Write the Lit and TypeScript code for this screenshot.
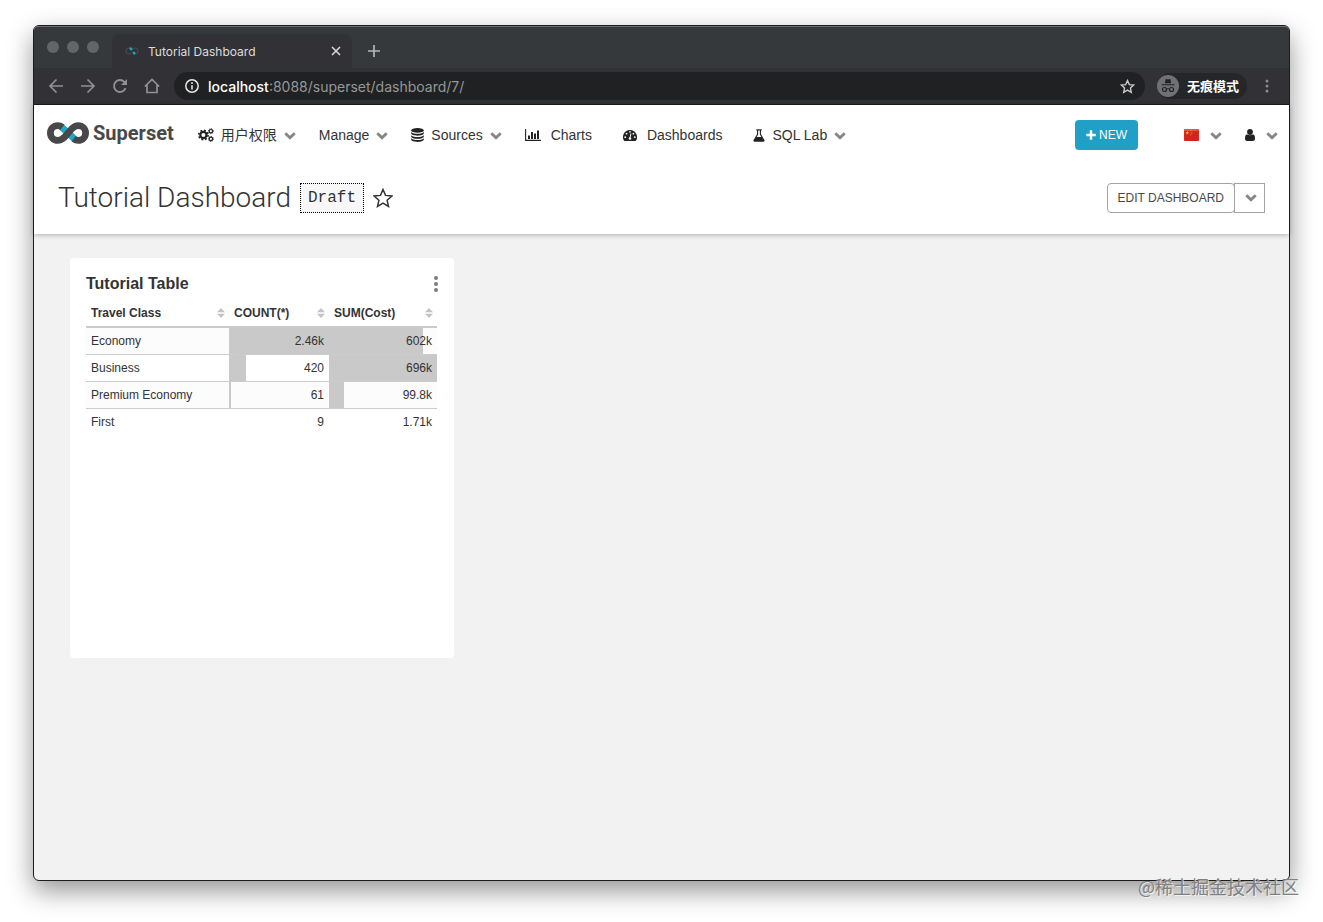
import { LitElement, html, css, svg } from "lit";
import { customElement } from "lit/decorators.js";
import { styleMap } from "lit/directives/style-map.js";

const chevron = html`<svg class="chevron" viewBox="0 0 12 8" width="12" height="8" aria-hidden="true">
  <path d="M1.3 1.2 6 5.8l4.7-4.6" fill="none" stroke="#868686" stroke-width="2.9" />
</svg>`;

const gears = html`<svg viewBox="0 0 16 14" width="16" height="14" aria-hidden="true">
  <circle cx="5.4" cy="7" r="3.1" fill="none" stroke="#222" stroke-width="2.2" />
  <circle cx="5.4" cy="7" r="4.7" fill="none" stroke="#222" stroke-width="1.6" stroke-dasharray="1.9 1.79" />
  ${[3.2, 10.9].map(
    (y) => svg`<circle cx="12.9" cy=${y} r="1.7" fill="none" stroke="#222" stroke-width="1.2" />
      <circle cx="12.9" cy=${y} r="2.5" fill="none" stroke="#222" stroke-width="1" stroke-dasharray="1 .96" />`
  )}
</svg>`;

const database = html`<svg viewBox="0 0 13 14" width="13" height="14" aria-hidden="true">
  <ellipse cx="6.5" cy="2.4" rx="6.3" ry="2.4" fill="#222" />
  ${[4.1, 7.2, 10.3].map(
    (y) => svg`<path transform="translate(0 ${y})" d="M.2 0C2 1.500 4 1.700 6.500 1.700S11 1.500 12.800 0v1.200c0 1.400-2.800 2.400-6.300 2.400S.2 2.600.2 1.200z" fill="#222" />`
  )}
</svg>`;

const bars = html`<svg viewBox="0 0 16 14" width="16" height="14" aria-hidden="true">
  <path d="M.6 1v11.400H16" fill="none" stroke="#222" stroke-width="1.100" />
  <path d="M3 7.500h2V11H3zM6 4h2v7H6zM9 5.500h2V11H9zM12 2.500h2V11h-2z" fill="#222" />
</svg>`;

const gauge = html`<svg viewBox="0 0 14 13" width="14" height="13" aria-hidden="true">
  <path d="M7 1a7 7 0 0 0-5.900 10.800c.1.200.3.200.5.200h10.800c.2 0 .4 0 .5-.2A7 7 0 0 0 7 1z" fill="#222" />
  <path d="M7.900 4.500 7.100 8.600" stroke="#fff" stroke-width="1" />
  <circle cx="7" cy="9.500" r="1.300" fill="#fff" />
  <circle cx="2.200" cy="8.200" r=".9" fill="#fff" /><circle cx="3.600" cy="4.700" r=".9" fill="#fff" />
  <circle cx="7" cy="2.900" r=".8" fill="#fff" /><circle cx="10.400" cy="4.700" r=".9" fill="#fff" />
  <circle cx="11.800" cy="8.200" r=".9" fill="#fff" />
</svg>`;

const flask = html`<svg viewBox="0 0 12 13" width="12" height="13" aria-hidden="true">
  <path d="M3.300.9h5.400" stroke="#222" stroke-width="1.200" />
  <path d="M4.600 1v4.300L1.100 11.200c-.3.600 0 .9.500.9h8.800c.5 0 .8-.3.500-.9L7.400 5.300V1" fill="none" stroke="#222" stroke-width="1.100" />
  <path d="M3.100 7.900h5.800l2.300 4.100H.8z" fill="#222" />
</svg>`;

const user = html`<svg viewBox="0 0 10 12" width="10" height="12" aria-hidden="true">
  <circle cx="5" cy="3" r="2.900" fill="#222" />
  <path d="M2 5.300C.6 5.600 0 7.200 0 9.500 0 11 .8 12 2 12h6c1.200 0 2-1 2-2.500C10 7.200 9.400 5.600 8 5.300 7 6.500 3 6.500 2 5.300z" fill="#222" />
</svg>`;

const flag = html`<svg viewBox="0 0 15 12" width="15" height="12" role="img" aria-label="中文">
  <rect width="15" height="12" rx="1" fill="#d8221c" />
  <path d="M0 1a1 1 0 0 1 1-1h13a1 1 0 0 1 1 1v1H0z" fill="#e6554a" />
  <path d="m3.300 2 .5 1.300h1.300l-1 .9.400 1.300-1.200-.8-1.200.8.400-1.300-1-.9h1.300z" fill="#f6c33c" />
  <path d="M6.200 1.400h.9M7.400 2.900h.9M7.400 4.500h.9M6.200 5.900h.9" stroke="#f0a83a" stroke-width=".8" />
</svg>`;

const brandMark = html`<svg viewBox="0 0 42 22" width="42" height="22" aria-hidden="true">
  <path d="M14.500 5 27.500 17" stroke="#20a7c9" stroke-width="7" fill="none" />
  <path d="M17.200 15.600C14.700 17.900 13 18.400 10.800 18.400a7.400 7.400 0 1 1 0-14.800c1.900 0 3.300.6 4.600 1.600" fill="none" stroke="#484848" stroke-width="6.800" />
  <path d="M26.600 16.800C27.900 17.800 29.300 18.400 31.200 18.400a7.400 7.400 0 1 0 0-14.800c-2.200 0-3.900.7-6.200 3l-8.200 9.400" fill="none" stroke="#484848" stroke-width="6.800" />
</svg>`;

interface NavEntry {
  label: string;
  icon?: unknown;
  menu?: boolean;
}

const NAV: NavEntry[] = [
  { label: "用户权限", icon: gears, menu: true },
  { label: "Manage", menu: true },
  { label: "Sources", icon: database, menu: true },
  { label: "Charts", icon: bars },
  { label: "Dashboards", icon: gauge },
  { label: "SQL Lab", icon: flask, menu: true },
];

const ROWS = [
  { travel: "Economy", count: "2.46k", countBar: 100, sum: "602k", sumBar: 87 },
  { travel: "Business", count: "420", countBar: 17, sum: "696k", sumBar: 100 },
  { travel: "Premium Economy", count: "61", countBar: 2, sum: "99.8k", sumBar: 14 },
  { travel: "First", count: "9", countBar: 0, sum: "1.71k", sumBar: 0 },
];

@customElement("browser-chrome")
export class BrowserChrome extends LitElement {
  static styles = css`
    :host {
      display: block;
      font-family: Inter, "Noto Sans CJK SC", sans-serif;
      color: #dcddde;
    }
    button {
      display: flex;
      padding: 0;
      border: 0;
      background: none;
      color: inherit;
      font: inherit;
    }
    svg {
      display: block;
      flex: none;
    }
    .strip {
      display: flex;
      align-items: flex-end;
      height: 42px;
      background: #36393b;
      border-radius: 4px 4px 0 0;
      box-shadow: inset 0 1px #6b6e70;
    }
    .lights {
      display: flex;
      gap: 8px;
      padding: 0 13px 15px 13px;
    }
    .light {
      width: 12px;
      height: 12px;
      border-radius: 50%;
      background: #626668;
    }
    .tab {
      display: flex;
      align-items: center;
      gap: 9px;
      width: 240px;
      height: 34px;
      padding: 0 11px 0 13px;
      box-sizing: border-box;
      border-radius: 8px 8px 0 0;
      background: #323136;
      font-size: 12px;
    }
    .tab-title {
      flex: 1;
    }
    .plus {
      padding: 0 16px 11px;
    }
    .toolbar {
      display: flex;
      align-items: center;
      gap: 16px;
      height: 36px;
      padding: 0 18px 0 14px;
      background: #323136;
      border-bottom: 1px solid #1c1c1e;
      color: #8f9193;
    }
    .address {
      display: flex;
      align-items: center;
      flex: 1;
      height: 28px;
      margin-left: -2px;
      padding: 0 10px 0 11px;
      border-radius: 14px;
      background: #1f2123;
      font-size: 14px;
    }
    .host {
      padding-left: 9px;
      color: #fff;
      font-weight: 500;
    }
    .path {
      flex: 1;
      min-width: 0;
      padding: 0;
      border: 0;
      outline: 0;
      background: none;
      color: #96989a;
      font: inherit;
    }
    .incognito {
      display: flex;
      align-items: center;
      gap: 8px;
      height: 26px;
      margin-left: -4px;
      padding-right: 8px;
      border-radius: 13px;
      background: #252629;
      color: #fff;
      font-size: 13px;
      font-weight: 700;
    }
    .mode {
      padding-bottom: 2px;
    }
  `;

  render() {
    return html`
      <div class="strip">
        <div class="lights"><span class="light"></span><span class="light"></span><span class="light"></span></div>
        <div class="tab">
          <svg viewBox="0 0 14 10" width="14" height="10" aria-hidden="true">
            <path d="M6 3C4.500 1.500 1 1.500 1 5s3.500 3.500 5 2M8 3c1.500-1.500 5-1.500 5 2s-3.500 3.500-5 2" fill="none" stroke="#45454a" stroke-width="1.500" />
            <path d="M5 1.800 7 4M8 6l2 2" stroke="#20a7c9" stroke-width="2.400" />
          </svg>
          <span class="tab-title">Tutorial Dashboard</span>
          <button aria-label="Close tab">
            <svg viewBox="0 0 10 10" width="10" height="10"><path d="m1 1 8 8M9 1 1 9" stroke="#dcddde" stroke-width="1.500" /></svg>
          </button>
        </div>
        <button class="plus" aria-label="New tab">
          <svg viewBox="0 0 12 12" width="12" height="12"><path d="M6 0v12M0 6h12" stroke="#b4b6b8" stroke-width="1.700" /></svg>
        </button>
      </div>
      <div class="toolbar">
        <button aria-label="Back">
          <svg viewBox="0 0 16 16" width="16" height="16"><path d="M15 8H2M8.500 1.500 2 8l6.500 6.500" fill="none" stroke="currentColor" stroke-width="1.700" /></svg>
        </button>
        <button aria-label="Forward">
          <svg viewBox="0 0 16 16" width="16" height="16"><path d="M1 8h13M7.500 1.500 14 8l-6.500 6.500" fill="none" stroke="currentColor" stroke-width="1.700" /></svg>
        </button>
        <button aria-label="Reload">
          <svg viewBox="0 0 16 16" width="16" height="16">
            <path d="M13.600 10.200A6 6 0 1 1 12.300 3.800L14 5.500" fill="none" stroke="currentColor" stroke-width="1.800" />
            <path d="M15 1v6H9z" fill="currentColor" />
          </svg>
        </button>
        <button aria-label="Home">
          <svg viewBox="0 0 16 16" width="16" height="16"><path d="M.8 8.500 8 1.500l7.200 7M3 7v7.500h10V7" fill="none" stroke="currentColor" stroke-width="1.700" /></svg>
        </button>
        <div class="address">
          <svg viewBox="0 0 14 14" width="14" height="14" aria-hidden="true">
            <circle cx="7" cy="7" r="6.200" fill="none" stroke="#e6e7e8" stroke-width="1.500" />
            <path d="M7 6.200v4.300M7 3.300v1.600" stroke="#e6e7e8" stroke-width="1.600" />
          </svg>
          <label class="host" for="address">localhost</label>
          <input class="path" id="address" type="text" value=":8088/superset/dashboard/7/" />
          <button aria-label="Bookmark">
            <svg viewBox="0 0 24 24" width="15" height="15"><path d="m12 2.500 2.900 6.400 7 .8-5.200 4.700 1.400 6.900L12 17.800l-6.100 3.500 1.400-6.900L2.100 9.700l7-.8z" fill="none" stroke="#c8cacb" stroke-width="2.200" /></svg>
          </button>
        </div>
        <div class="incognito">
          <svg viewBox="0 0 22 22" width="22" height="22" aria-hidden="true">
            <circle cx="11" cy="11" r="11" fill="#6f7173" />
            <path d="M7.800 8.300 8.600 4.500c.1-.4.400-.5.800-.4l1.600.4 1.600-.4c.4-.1.700 0 .8.400l.8 3.800zM4.500 9.200h13v1.100h-13z" fill="#222326" />
            <path d="M9.500 14.200c1-.6 2-.6 3 0" fill="none" stroke="#222326" />
            <circle cx="7.500" cy="14.500" r="2" fill="none" stroke="#222326" stroke-width="1.200" />
            <circle cx="14.500" cy="14.500" r="2" fill="none" stroke="#222326" stroke-width="1.200" />
          </svg>
          <span class="mode">无痕模式</span>
        </div>
        <button aria-label="Browser menu">
          <svg viewBox="0 0 8 16" width="8" height="16" fill="#8a8c8e">
            <circle cx="4" cy="3" r="1.500" /><circle cx="4" cy="8" r="1.500" /><circle cx="4" cy="13" r="1.500" />
          </svg>
        </button>
      </div>
    `;
  }
}

@customElement("superset-nav")
export class SupersetNav extends LitElement {
  static styles = css`
    :host {
      display: flex;
      align-items: center;
      height: 60px;
      padding: 0 11px 0 13px;
      color: #333;
      font-family: "Liberation Sans", "Noto Sans CJK SC", sans-serif;
      font-size: 14px;
    }
    a {
      color: inherit;
      text-decoration: none;
    }
    svg {
      display: block;
      flex: none;
    }
    .brand {
      display: flex;
      align-items: center;
      gap: 4px;
      padding: 0 24px 4px 0;
      color: #484848;
      font-family: Roboto, sans-serif;
      font-size: 20px;
      line-height: 24px;
      font-weight: 700;
    }
    .items {
      display: flex;
      flex: 1;
      align-items: center;
    }
    .item {
      display: flex;
      align-items: center;
      gap: 10px;
      margin-right: 31px;
      line-height: 20px;
    }
    .menu {
      gap: 7px;
      margin-right: 23px;
    }
    .chevron {
      padding-top: 2px;
    }
    .new {
      display: flex;
      align-items: center;
      justify-content: center;
      gap: 3px;
      height: 30px;
      padding: 0 11px;
      border: 0;
      border-radius: 4px;
      background: #20a0c6;
      color: #fff;
      font-family: inherit;
      font-size: 12px;
    }
    .tools {
      display: flex;
      gap: 23px;
      padding-left: 46px;
    }
    .tool {
      display: flex;
      align-items: center;
      gap: 11px;
    }
  `;

  render() {
    return html`
      <a class="brand" href="#">${brandMark}<span>Superset</span></a>
      <nav class="items">
        ${NAV.map(
          (n) => html`<a class="item ${n.menu ? "menu" : ""}" href="#">${n.icon ?? ""}<span>${n.label}</span>${n.menu ? chevron : ""}</a>`
        )}
      </nav>
      <button class="new">
        <svg viewBox="0 0 10 10" width="10" height="10" aria-hidden="true"><path d="M5 .3v9.400M.3 5h9.400" stroke="#fff" stroke-width="2.500" /></svg>
        <span>NEW</span>
      </button>
      <div class="tools">
        <a class="tool" href="#" aria-label="Language">${flag}${chevron}</a>
        <a class="tool" href="#" aria-label="Account">${user}${chevron}</a>
      </div>
    `;
  }
}

@customElement("chart-card")
export class ChartCard extends LitElement {
  static styles = css`
    :host {
      display: block;
      width: 384px;
      min-height: 400px;
      padding: 16px;
      box-sizing: border-box;
      border-radius: 4px;
      background: #fff;
      color: #333;
      font-family: "Liberation Sans", sans-serif;
    }
    .head {
      display: flex;
      align-items: center;
      justify-content: space-between;
      height: 20px;
    }
    h2 {
      margin: 0;
      font-size: 16px;
      line-height: 20px;
    }
    .more {
      display: flex;
      padding: 0;
      border: 0;
      background: none;
    }
    table {
      width: 351px;
      margin-top: 6px;
      table-layout: fixed;
      border-collapse: separate;
      border-spacing: 0;
      font-size: 12px;
      line-height: 16px;
    }
    th {
      box-sizing: border-box;
      padding: 5px 4px 5px 5px;
      border-bottom: 2px solid #c9cccb;
      text-align: left;
    }
    .travel {
      width: 143px;
    }
    .count {
      width: 100px;
    }
    .label {
      display: flex;
      align-items: center;
      justify-content: space-between;
    }
    td {
      padding: 5px;
      border-bottom: 1px solid #ccc;
    }
    tr:nth-child(odd) td {
      background-color: #fcfcfc;
    }
    tr:last-child td {
      border-bottom: 0;
      background-color: #fff;
    }
    .number {
      background-image: linear-gradient(#c9c9c9, #c9c9c9);
      background-repeat: no-repeat;
      background-origin: border-box;
      text-align: right;
    }
  `;

  private heading(label: string, cls: string) {
    return html`<th class=${cls} scope="col">
      <span class="label">${label}
        <svg viewBox="0 0 8 10" width="8" height="10" aria-hidden="true"><path d="M0 4.200 4 0l4 4.200zM0 5.800h8L4 10z" fill="#c4c4c4" /></svg>
      </span>
    </th>`;
  }

  render() {
    return html`
      <div class="head">
        <h2>Tutorial Table</h2>
        <button class="more" aria-label="Chart options">
          <svg viewBox="0 0 4 16" width="4" height="16" fill="#7c7c7c">
            <circle cx="2" cy="2" r="2" /><circle cx="2" cy="8" r="2" /><circle cx="2" cy="14" r="2" />
          </svg>
        </button>
      </div>
      <table>
        <thead>
          <tr>${this.heading("Travel Class", "travel")}${this.heading("COUNT(*)", "count")}${this.heading("SUM(Cost)", "sum")}</tr>
        </thead>
        <tbody>
          ${ROWS.map(
            (r) => html`<tr>
              <td>${r.travel}</td>
              <td class="number" style=${styleMap({ backgroundSize: `${r.countBar}% 100%` })}>${r.count}</td>
              <td class="number" style=${styleMap({ backgroundSize: `${r.sumBar}% 100%` })}>${r.sum}</td>
            </tr>`
          )}
        </tbody>
      </table>
    `;
  }
}

@customElement("app-root")
export class AppRoot extends LitElement {
  static styles = css`
    :host {
      display: flex;
      position: relative;
      min-height: 100vh;
      padding: 25px 33px 41px;
      box-sizing: border-box;
      background: #fff;
      overflow: hidden;
      color: #333;
      font-family: "Liberation Sans", "Noto Sans CJK SC", sans-serif;
    }
    .window {
      display: flex;
      flex: 1;
      flex-direction: column;
      border: 1px solid #1c1c1e;
      border-radius: 6px;
      background: #f2f2f2;
      box-shadow: 0 10px 26px rgba(0, 0, 0, 0.42);
    }
    .top {
      background: #fff;
      box-shadow: 0 1px 5px rgba(0, 0, 0, 0.28);
    }
    .header {
      display: flex;
      align-items: center;
      height: 69px;
      padding: 0 24px 3px;
      box-sizing: border-box;
      gap: 9px;
    }
    h1 {
      margin: 0;
      font-family: Roboto, sans-serif;
      font-size: 28px;
      line-height: 32px;
      font-weight: 300;
    }
    .draft {
      height: 30px;
      padding: 0 7px;
      box-sizing: border-box;
      border: 1px dotted #000;
      background: #f7f7f7;
      font-family: "Liberation Mono", monospace;
      font-size: 16px;
      line-height: 28px;
    }
    .star {
      display: flex;
      padding: 0;
      border: 0;
      background: none;
    }
    .edit {
      display: flex;
      margin-left: auto;
    }
    .edit button {
      height: 30px;
      padding: 0 10px;
      border: 1px solid #a3a3a3;
      background: #fff;
      color: #484848;
      font-family: inherit;
      font-size: 12px;
    }
    .edit .main {
      border-radius: 4px;
    }
    .edit .caret {
      padding: 0 7px 0 10px;
      margin-left: -1px;
    }
    .board {
      padding: 24px 36px;
    }
    .watermark {
      position: absolute;
      right: 24px;
      bottom: 24px;
      color: #808080;
      font-family: "Noto Sans CJK SC", sans-serif;
      font-size: 18px;
      font-weight: 400;
      line-height: 24px;
      text-shadow: 1px 1px 0 rgba(255, 255, 255, 0.7);
    }
  `;

  render() {
    return html`
      <div class="window">
        <browser-chrome></browser-chrome>
        <div class="top">
          <superset-nav></superset-nav>
          <header class="header">
            <h1>Tutorial Dashboard</h1>
            <span class="draft">Draft</span>
            <button class="star" aria-label="Favorite">
              <svg viewBox="0 0 20 20" width="20" height="20">
                <path d="m10 1.500 2.500 5.900 6.400.6-4.800 4.200 1.400 6.200L10 15.100l-5.500 3.300 1.400-6.200L1.100 8l6.400-.6z" fill="none" stroke="#333" stroke-width="1.500" />
              </svg>
            </button>
            <div class="edit">
              <button class="main">EDIT DASHBOARD</button>
              <button class="caret" aria-label="More actions">${chevron}</button>
            </div>
          </header>
        </div>
        <main class="board"><chart-card></chart-card></main>
      </div>
      <div class="watermark">@稀土掘金技术社区</div>
    `;
  }
}
